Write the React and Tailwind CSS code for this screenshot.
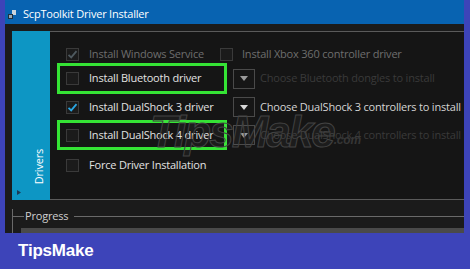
import React from "react";

function Check({ state = "off", tone = "on" }) {
  const color = tone === "disabled" ? "#4f5a60" : "#2aa6e2";
  return (
    <span className="flex h-[13px] w-[13px] shrink-0 items-center justify-center border border-[#3a3a3a] bg-[#1b1b1b]">
      {state === "on" && (
        <svg width="11" height="11" viewBox="0 0 11 11">
          <path d="M1.5 5.8 L4.2 8.4 L9.5 2.2" fill="none" stroke={color} strokeWidth="1.8" />
        </svg>
      )}
    </span>
  );
}

function Drop({ dim }) {
  return (
    <span className="flex h-[20px] w-[22px] shrink-0 items-center justify-center border border-[#4a4a4a] bg-[#161616]">
      <svg width="8" height="5" viewBox="0 0 8 5">
        <path d="M0 0 H8 L4 5 Z" fill={dim ? "#9a9a9a" : "#d8d8d8"} />
      </svg>
    </span>
  );
}

function Row({ h, boxed, checked, label, choose, chooseDim }) {
  return (
    <div className="flex items-center" style={{ height: h }}>
      <div
        className={`flex h-full w-[170px] shrink-0 items-center gap-[10px] border-[3px] pl-[6px] ${
          boxed ? "border-[#35e335]" : "border-transparent"
        }`}
      >
        <Check state={checked ? "on" : "off"} />
        <span className="text-[#e2e2e2]">{label}</span>
      </div>
      {choose && (
        <div className="ml-[6px] flex items-center gap-[5px]">
          <Drop dim={chooseDim} />
          <span className={chooseDim ? "text-[#3a3a3a]" : "text-[#d4d4d4]"}>{choose}</span>
        </div>
      )}
    </div>
  );
}

export default function App() {
  return (
    <div className="relative h-[269px] w-[470px] overflow-hidden bg-[#3d44b9] font-['Open_Sans',sans-serif] text-[11px] tracking-[-0.2px]">
      <div className="ml-[5px] flex h-[233px] w-[459px] flex-col bg-[#1b1b1b]">
        {/* title bar */}
        <div className="flex h-[24px] shrink-0 items-center gap-[6px] bg-[#0863b1] pl-[3px] pt-[4px]">
          <svg width="9" height="9" viewBox="0 0 9 9">
            <rect x="4" y="0" width="4" height="5" fill="#c9d4de" />
            <rect x="0" y="4" width="5" height="5" fill="#20303f" />
            <rect x="1" y="5" width="3" height="3" fill="#9aa8b4" />
          </svg>
          <span className="text-[11px] text-white">ScpToolkit Driver Installer</span>
        </div>
        {/* tab control */}
        <div className="mt-[7px] flex h-[169px] shrink-0 pl-[7px]">
          <div className="flex w-[38px] shrink-0 flex-col justify-end bg-[#0d96c4] pb-[5px]">
            <span className="mb-[6px] mr-[5px] self-end rotate-180 text-[11px] leading-[12px] text-white [writing-mode:vertical-rl]">
              Drivers
            </span>
            <svg className="ml-[5px]" width="4" height="5" viewBox="0 0 4 5">
              <path d="M0 0 L4 2.5 L0 5 Z" fill="#1b3b55" />
            </svg>
          </div>
          <div className="flex flex-1 flex-col border-t border-b border-[#5a5a5a] bg-[#151515] pl-[7px] pt-[13px]">
            <div className="flex h-[18px] items-center">
              <div className="flex w-[163px] items-center gap-[10px] pl-[9px]">
                <Check state="on" tone="disabled" />
                <span className="text-[#6e6e6e]">Install Windows Service</span>
              </div>
              <div className="flex items-center gap-[9px]">
                <Check />
                <span className="text-[#6e6e6e]">Install Xbox 360 controller driver</span>
              </div>
            </div>
            <Row h={31} boxed label="Install Bluetooth driver" choose="Choose Bluetooth dongles to install" chooseDim />
            <Row h={26} checked label="Install DualShock 3 driver" choose="Choose DualShock 3 controllers to install" />
            <Row h={30} boxed label="Install DualShock 4 driver" choose="Choose DualShock 4 controllers to install" chooseDim />
            <Row h={30} label="Force Driver Installation" />
          </div>
        </div>
        {/* progress group */}
        <div className="ml-[7px] mt-[9px] flex flex-1 flex-col border-l border-[#6a6a6a]">
          <div className="flex items-center">
            <span className="h-px w-[11px] bg-[#6a6a6a]" />
            <span className="px-[1px] leading-[14px] text-[#cfcfcf]">Progress</span>
            <span className="ml-[5px] h-px flex-1 bg-[#6a6a6a]" />
          </div>
          <div className="ml-[8px] mt-auto h-[5px] bg-[#4a4a4a]" />
        </div>
      </div>
      {/* watermark */}
      <div className="pointer-events-none absolute left-[150px] top-[108px] flex items-end font-['Liberation_Sans',sans-serif] font-bold italic text-[#ffffff0a] [-webkit-text-stroke:1px_#434343]">
        <span className="text-[44px] leading-[48px] tracking-[-2px]">TipsMake</span>
        <span className="mb-[10px] text-[12px] leading-[12px] text-[#363636] [-webkit-text-stroke:0]">.com</span>
      </div>
      {/* footer brand */}
      <div className="flex h-[36px] items-center pl-[18px]">
        <span className="font-['Liberation_Sans',sans-serif] text-[17px] font-bold text-white">TipsMake</span>
      </div>
    </div>
  );
}
